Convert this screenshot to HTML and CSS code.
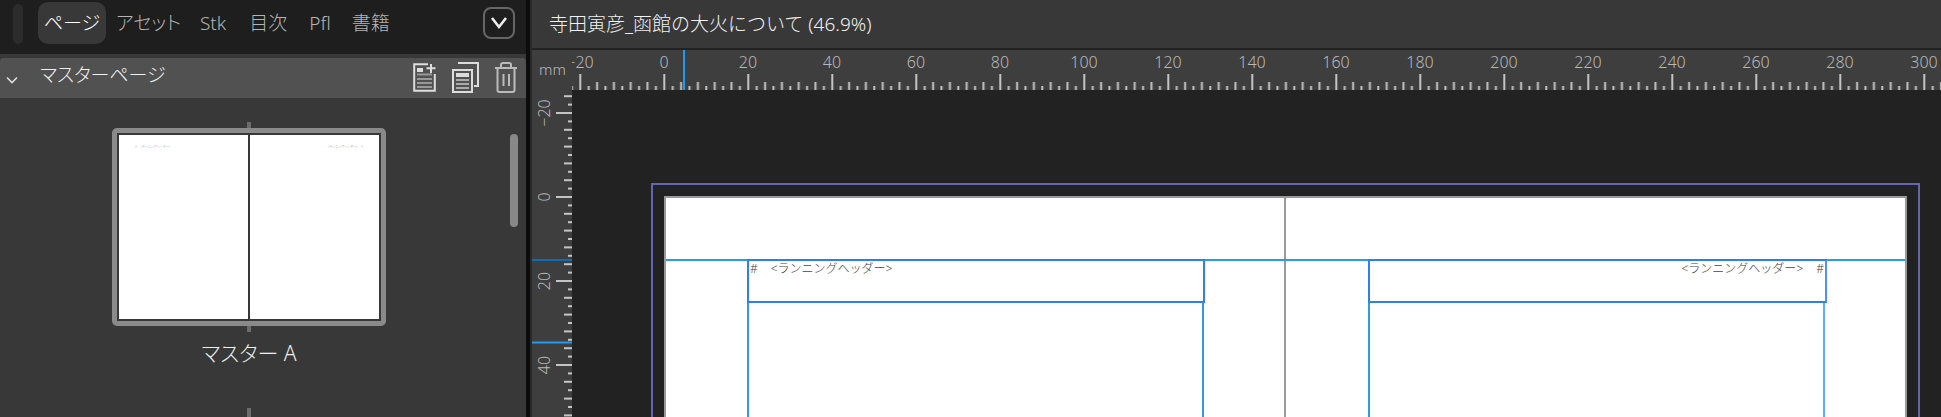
FILE: index.html
```html
<!DOCTYPE html>
<html lang="ja">
<head>
    <meta charset="UTF-8">
    <title>寺田寅彦_函館の大火について</title>
    <link rel="stylesheet" href="styles.css">
</head>
<body>
    <div class="sidebar">
        <div class="tabs">
            <div class="grip"></div>
            <div class="tab active tab-page">ページ</div>
            <div class="tab tab-asset">アセット</div>
            <div class="tab tab-stk">Stk</div>
            <div class="tab tab-toc">目次</div>
            <div class="tab tab-pfl">Pfl</div>
            <div class="tab tab-book">書籍</div>
            <div class="tab-menu">
                <svg width="18" height="14" viewBox="0 0 18 14"><path d="M2 2l7 9 7-9" fill="none" stroke="#eee" stroke-width="2.6"/></svg>
            </div>
        </div>
        <div class="section-gap"></div>
        <div class="section-head">
            <svg class="chevron" width="12" height="8" viewBox="0 0 12 8"><path d="M1 1.5l5 5 5-5" fill="none" stroke="#ddd" stroke-width="1.6"/></svg>
            <span class="section-title">マスターページ</span>
            <div class="section-icons">
                <svg class="icon-new" width="23" height="29" viewBox="0 0 23 29">
                    <path d="M15 1.2H1.2v26.6h20.6V11" fill="none" stroke="#ddd" stroke-width="2"/>
                    <path d="M18 1v9M13.500 5.200h9" fill="none" stroke="#ddd" stroke-width="2"/>
                    <rect x="4" y="5" width="6" height="4" fill="#ddd"/>
                    <path d="M4 11.500h15M4 16h15M4 20h15M4 24h15" stroke="#999" stroke-width="2"/>
                </svg>
                <svg class="icon-copy" width="27" height="31" viewBox="0 0 27 31">
                    <path d="M6 1h20v23h-4" fill="none" stroke="#ddd" stroke-width="2"/>
                    <rect x="1" y="8" width="19" height="22" fill="none" stroke="#ddd" stroke-width="2"/>
                    <rect x="4" y="11" width="13" height="4" fill="#ddd"/>
                    <path d="M4 18h13M4 22h13M4 26h13" stroke="#aaa" stroke-width="2"/>
                </svg>
                <svg class="icon-trash" width="24" height="31" viewBox="0 0 24 31">
                    <path d="M1 6h22M7 6V2.500Q7 1 9 1h6q2 0 2 1.500V6" fill="none" stroke="#bbb" stroke-width="2"/>
                    <path d="M3.500 6v22q0 2 2 2h13q2 0 2-2V6" fill="none" stroke="#bbb" stroke-width="2"/>
                    <path d="M9.500 12v12M15 12v12" stroke="#bbb" stroke-width="2"/>
                </svg>
            </div>
        </div>
        <div class="page-list">
            <div class="spine-tick"></div>
            <div class="thumb">
                <div class="thumb-page"><span class="thumb-text">#　&lt;ランニングヘッダー&gt;</span></div>
                <div class="thumb-page thumb-right"><span class="thumb-text">&lt;ランニングヘッダー&gt;　#</span></div>
            </div>
            <div class="spine-tick"></div>
            <div class="thumb-label">マスター A</div>
            <div class="spine-tick next"></div>
            <div class="scrollbar"></div>
        </div>
    </div>

    <div class="main">
        <div class="titlebar">寺田寅彦_函館の大火について (46.9%)</div>
        <div class="ruler-row">
            <div class="ruler-unit">mm</div>
            <svg class="ruler-x" width="1369" height="40">
                <defs>
                    <pattern id="ticksX" patternUnits="userSpaceOnUse" x="7.300" y="0" width="84" height="40">
                        <rect x="0" y="24" width="2" height="16" fill="#c4c4c4"/>
                        <rect x="8.400" y="36" width="2" height="4" fill="#c4c4c4"/>
                        <rect x="16.800" y="32" width="2" height="8" fill="#c4c4c4"/>
                        <rect x="25.200" y="36" width="2" height="4" fill="#c4c4c4"/>
                        <rect x="33.600" y="32" width="2" height="8" fill="#c4c4c4"/>
                        <rect x="42" y="36" width="2" height="4" fill="#c4c4c4"/>
                        <rect x="50.400" y="32" width="2" height="8" fill="#c4c4c4"/>
                        <rect x="58.800" y="36" width="2" height="4" fill="#c4c4c4"/>
                        <rect x="67.200" y="32" width="2" height="8" fill="#c4c4c4"/>
                        <rect x="75.600" y="36" width="2" height="4" fill="#c4c4c4"/>
                    </pattern>
                </defs>
                <rect width="1369" height="40" fill="url(#ticksX)"/>
                <rect x="111" y="0" width="2" height="40" fill="#1e9bf0"/>
                <g class="ruler-num">
                    <text x="8" y="18">−20</text><text x="92" y="18">0</text><text x="176" y="18">20</text>
                    <text x="260" y="18">40</text><text x="344" y="18">60</text><text x="428" y="18">80</text>
                    <text x="512" y="18">100</text><text x="596" y="18">120</text><text x="680" y="18">140</text>
                    <text x="764" y="18">160</text><text x="848" y="18">180</text><text x="932" y="18">200</text>
                    <text x="1016" y="18">220</text><text x="1100" y="18">240</text><text x="1184" y="18">260</text>
                    <text x="1268" y="18">280</text><text x="1352" y="18">300</text>
                </g>
            </svg>
        </div>
        <div class="work">
            <svg class="ruler-y" width="40" height="327">
                <defs>
                    <pattern id="ticksY" patternUnits="userSpaceOnUse" x="0" y="22" width="40" height="84">
                        <rect x="24" y="0" width="16" height="2" fill="#c4c4c4"/>
                        <rect x="36" y="8.400" width="4" height="2" fill="#c4c4c4"/>
                        <rect x="32" y="16.800" width="8" height="2" fill="#c4c4c4"/>
                        <rect x="36" y="25.200" width="4" height="2" fill="#c4c4c4"/>
                        <rect x="32" y="33.600" width="8" height="2" fill="#c4c4c4"/>
                        <rect x="36" y="42" width="4" height="2" fill="#c4c4c4"/>
                        <rect x="32" y="50.400" width="8" height="2" fill="#c4c4c4"/>
                        <rect x="36" y="58.800" width="4" height="2" fill="#c4c4c4"/>
                        <rect x="32" y="67.200" width="8" height="2" fill="#c4c4c4"/>
                        <rect x="36" y="75.600" width="4" height="2" fill="#c4c4c4"/>
                    </pattern>
                </defs>
                <rect width="40" height="327" fill="url(#ticksY)"/>
                <rect x="0" y="169" width="40" height="2" fill="#0f6cb4"/>
                <rect x="0" y="251.500" width="40" height="2" fill="#1e9bf0"/>
                <g class="ruler-num">
                    <text transform="translate(18 23) rotate(-90)">−20</text>
                    <text transform="translate(18 107) rotate(-90)">0</text>
                    <text transform="translate(18 191) rotate(-90)">20</text>
                    <text transform="translate(18 275) rotate(-90)">40</text>
                </g>
            </svg>
            <div class="canvas">
                <div class="bleed">
                    <div class="spread">
                        <div class="leaf leaf-left">
                            <div class="frame-head"><span>#</span><span class="gap-run">&lt;ランニングヘッダー&gt;</span></div>
                            <div class="frame-body"></div>
                        </div>
                        <div class="leaf leaf-right">
                            <div class="frame-head head-right"><span class="gap-run">&lt;ランニングヘッダー&gt;</span><span>#</span></div>
                            <div class="frame-body body-right"></div>
                        </div>
                        <div class="guide"></div>
                    </div>
                </div>
            </div>
        </div>
    </div>
</body>
</html>
```

FILE: styles.css
```css
html, body {
    margin: 0;
    padding: 0;
    height: 100%;
    overflow: hidden;
}

body {
    display: flex;
    background-color: #222;
    color: #eee;
    font-family: "Noto Sans", "Noto Sans CJK JP", sans-serif;
    font-weight: 300;
}

.sidebar {
    width: 526px;
    height: 417px;
    flex: none;
    background-color: #383838;
    border-right: 4px solid #0c0c0c;
}

.tabs {
    height: 54px;
    background-color: #1e1e1e;
    position: relative;
    display: flex;
    align-items: flex-start;
}

.grip {
    width: 10px;
    height: 40px;
    margin: 4px 15px 0 13px;
    background-color: #2c2c2c;
    border-radius: 5px;
}

.tab {
    height: 42px;
    margin-top: 2px;
    line-height: 42px;
    font-size: 19px;
    font-feature-settings: "palt";
    color: #b4b4b4;
    white-space: nowrap;
}

.tab.active {
    background-color: #383838;
    border-radius: 10px;
    color: #fff;
    width: 68px;
    text-align: center;
}

.tab-asset { margin-left: 10px; }
.tab-stk { margin-left: 19px; }
.tab-toc { margin-left: 23px; }
.tab-pfl { margin-left: 22px; }
.tab-book { margin-left: 21px; }

.tab-menu {
    width: 28px;
    height: 28px;
    margin: 7px 0 0 auto;
    margin-right: 11px;
    border: 2px solid #666;
    border-radius: 8px;
    display: flex;
    align-items: center;
    justify-content: center;
}

.section-gap {
    height: 4px;
}

.section-head {
    height: 40px;
    background-color: #515151;
    border-radius: 4px 4px 0 0;
    display: flex;
    align-items: flex-start;
}

.chevron {
    margin: 18px 0 0 6px;
}

.section-title {
    margin: 0 0 0 22px;
    font-size: 19px;
    line-height: 34px;
    font-feature-settings: "palt";
    color: #f0f0f0;
}

.section-icons {
    margin-left: auto;
    display: flex;
    align-items: flex-start;
    padding: 4px 8px 0 0;
}

.icon-new { margin-top: 1px; }
.icon-copy { margin-left: 16px; }
.icon-trash { margin-left: 15px; }

.page-list {
    position: relative;
    width: 498px;
    padding: 24px 14px 0 14px;
    box-sizing: border-box;
    display: flex;
    flex-direction: column;
    align-items: center;
}

.spine-tick {
    width: 4px;
    height: 6px;
    background-color: #6c6c6c;
}

.spine-tick.next {
    height: 9px;
}

.thumb {
    width: 260px;
    height: 184px;
    padding: 2px;
    background-color: #383838;
    border: 5px solid #8a8a8a;
    border-radius: 5px;
    display: flex;
    gap: 2px;
}

.thumb-page {
    flex: 1;
    background-color: #fff;
    padding: 10px 16px;
    font-size: 3px;
    line-height: 5px;
    color: #888;
}

.thumb-right {
    text-align: right;
}

.thumb-label {
    height: 76px;
    line-height: 42px;
    font-size: 21px;
    font-feature-settings: "palt";
    color: #eee;
}

.scrollbar {
    position: absolute;
    left: 510px;
    top: 36px;
    width: 8px;
    height: 93px;
    border-radius: 4px;
    background-color: #888;
}

.main {
    flex: 1;
    min-width: 0;
    border-left: 2px solid #2a2a2a;
}

.titlebar {
    height: 48px;
    margin-bottom: 2px;
    padding-left: 17px;
    line-height: 48px;
    background-color: #383838;
    font-size: 19px;
    color: #f2f2f2;
    white-space: nowrap;
}

.ruler-row {
    height: 40px;
    display: flex;
    background-color: #3e3e3e;
}

.ruler-unit {
    width: 40px;
    flex: none;
    padding: 9px 0 0 7px;
    box-sizing: border-box;
    font-size: 15px;
    color: #bbb;
}

.ruler-x, .ruler-y {
    display: block;
    flex: none;
}

.ruler-num text {
    font-size: 16px;
    fill: #b8b8b8;
    text-anchor: middle;
}

.work {
    height: 327px;
    display: flex;
}

.ruler-y {
    background-color: #3e3e3e;
}

.canvas {
    flex: 1;
    min-width: 0;
    position: relative;
    overflow: hidden;
}

.bleed {
    position: absolute;
    left: 79px;
    top: 93px;
    width: 1269px;
    height: 400px;
    box-sizing: border-box;
    padding: 11px;
    border: 2px solid #6464b4;
}

.spread {
    position: relative;
    height: 400px;
    background-color: #fff;
    border: 2px solid #999;
    display: flex;
}

.leaf {
    flex: 1;
    padding-top: 61px;
}

.leaf-left {
    padding-left: 81px;
    border-right: 1px solid #999;
}

.leaf-right {
    padding-left: 82px;
    border-left: 1px solid #999;
}

.frame-head, .frame-body {
    width: 453px;
    position: relative;
    z-index: 1;
}

.frame-head {
    height: 40px;
    border: 2px solid #2d80e6;
    display: flex;
    align-items: flex-start;
    padding-left: 1px;
    font-size: 12px;
    line-height: 15px;
    color: #444;
}

.frame-body {
    height: 200px;
    border-left: 2px solid #3399e6;
    border-right: 2px solid #3399e6;
    box-sizing: content-box;
}

.body-right {
    border-right-color: #5cb0f8;
}

.gap-run {
    margin-left: 13px;
}

.head-right {
    justify-content: flex-end;
    border-right-color: #4d94f0;
    padding-right: 1px;
}

.head-right .gap-run {
    margin: 0 13px 0 0;
}

.guide {
    position: absolute;
    left: 0;
    right: 0;
    top: 61px;
    height: 2px;
    background-color: #2f9be8;
}
```
